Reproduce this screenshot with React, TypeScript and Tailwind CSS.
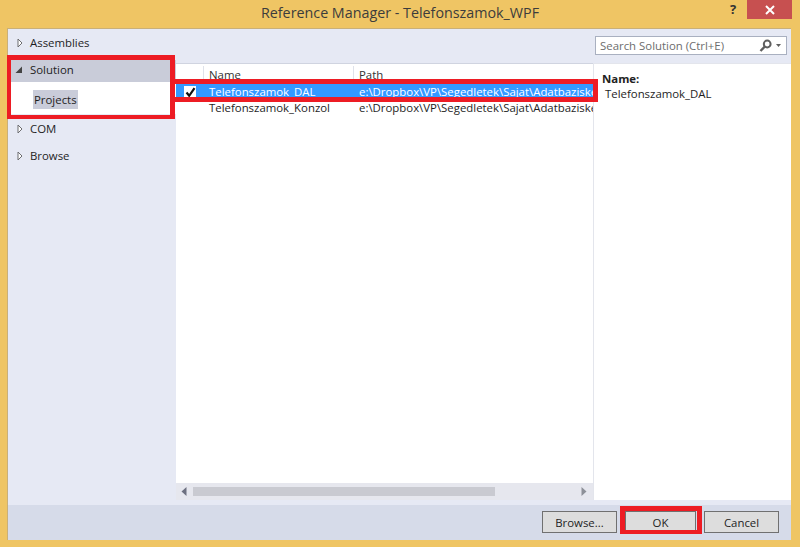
import React from "react";

const Closed = () => (
  <svg width="6" height="10" viewBox="0 0 6 10" className="shrink-0">
    <path d="M1 1 L5 5 L1 9 Z" fill="#ffffff" stroke="#6d6d70" strokeWidth="1" />
  </svg>
);
const Open = () => (
  <svg width="8" height="8" viewBox="0 0 8 8" className="shrink-0">
    <path d="M7 0.5 V7 H0.5 Z" fill="#444444" />
  </svg>
);

const TreeRow = ({ label, top }: { label: string; top: string }) => (
  <div className={`flex items-center h-[17px] pl-[9px] gap-[7px] ${top}`}>
    <Closed />
    <span>{label}</span>
  </div>
);

export default function App() {
  return (
    <div
      className="relative w-[800px] h-[547px] overflow-hidden bg-[#efc564] flex flex-col text-[11.4px] leading-[16px] text-[#1e1e1e]"
      style={{ fontFamily: '"Open Sans", "Noto Sans", sans-serif' }}
    >
      <div className="flex h-[28px] shrink-0">
        <div className="flex-1 pl-[81px] pt-[3px] text-center text-[14.3px] leading-[20px] text-[#3c3c3c]">
          Reference Manager - Telefonszamok_WPF
        </div>
        <div className="w-[28px] text-center font-bold text-[13px] leading-[18px] text-[#333]">?</div>
        <div className="w-[45px] h-[19px] mr-[8px] bg-[#c75050] flex items-center justify-center">
          <svg width="10" height="10" viewBox="0 0 10 10">
            <path d="M1 1 L9 9 M9 1 L1 9" stroke="#ffffff" strokeWidth="2" />
          </svg>
        </div>
      </div>
      <div className="ml-[7px] mr-[9px] mb-[7px] flex-1 min-h-0 flex flex-col border-t border-l border-[#c9b079] bg-[#e6e9f4]">
        <div className="flex flex-1 min-h-0">
          <div className="w-[168px] shrink-0 pt-[5px]">
            <TreeRow label="Assemblies" top="" />
            <div className="mt-[9px] h-[22px] pb-[2px] bg-[#c9ccd9] flex items-center pl-[7px] gap-[7px]">
              <Open />
              <span>Solution</span>
            </div>
            <div className="h-[32px] bg-white flex items-start pt-[8px] pl-[25px]">
              <span className="bg-[#c9ccd9] px-[1px] h-[19px] leading-[19px]">Projects</span>
            </div>
            <TreeRow label="COM" top="mt-[6px]" />
            <TreeRow label="Browse" top="mt-[10px]" />
          </div>
          <div className="flex-1 min-w-0 flex flex-col">
            <div className="h-[34px] shrink-0 flex justify-end items-start pt-[7px] pr-[4px]">
              <div className="w-[192px] h-[19px] bg-white border border-[#a9b0c0] flex items-center pl-[4px] pr-[5px] justify-between text-[#6d6d6d]">
                <span>Search Solution (Ctrl+E)</span>
                <div className="flex items-center gap-[4px]">
                  <svg width="13" height="14" viewBox="0 0 13 14">
                    <circle cx="8.2" cy="5" r="3.4" fill="none" stroke="#5f5f5f" strokeWidth="2" />
                    <path d="M5.8 7.5 L1.5 12" stroke="#5f5f5f" strokeWidth="2.4" />
                  </svg>
                  <svg width="5" height="3" viewBox="0 0 5 3">
                    <path d="M0 0 H5 L2.5 3 Z" fill="#5f5f5f" />
                  </svg>
                </div>
              </div>
            </div>
            <div className="flex flex-1 min-h-0 mb-[5px]">
              <div className="w-[417px] shrink-0 flex flex-col bg-white border-t border-[#d0d4e0]">
                <div className="flex-1 min-h-0 overflow-hidden">
                  <div className="flex h-[17px] pt-[2px] leading-[17px] text-[#333]">
                    <div className="w-[28px] border-r border-[#dfe2ea]" />
                    <div className="w-[150px] pl-[5px] border-r border-[#dfe2ea]">Name</div>
                    <div className="pl-[5px]">Path</div>
                  </div>
                  <div className="flex h-[16px] bg-[#3399ff] text-white items-center whitespace-nowrap overflow-hidden mt-[3px]">
                    <div className="w-[28px] flex justify-start shrink-0 pl-[8px]">
                      <div className="w-[12px] h-[13px] bg-white flex items-center justify-center">
                        <svg width="11" height="11" viewBox="0 0 11 11">
                          <path d="M1.5 5.5 L4.2 8.8 L9.5 1.2" fill="none" stroke="#111111" strokeWidth="2.2" />
                        </svg>
                      </div>
                    </div>
                    <div className="w-[150px] pl-[5px] shrink-0">Telefonszamok_DAL</div>
                    <div className="pl-[5px]">e:\Dropbox\VP\Segedletek\Sajat\Adatbaziskezeles</div>
                  </div>
                  <div className="flex h-[16px] items-center whitespace-nowrap overflow-hidden">
                    <div className="w-[28px] shrink-0" />
                    <div className="w-[150px] pl-[5px] shrink-0">Telefonszamok_Konzol</div>
                    <div className="pl-[5px]">e:\Dropbox\VP\Segedletek\Sajat\Adatbaziskezeles</div>
                  </div>
                </div>
                <div className="h-[17px] shrink-0 bg-[#e6e7ee] flex items-center pl-[5px] pr-[6px]">
                  <svg width="6" height="9" viewBox="0 0 6 9"><path d="M5.5 0 V9 L0.5 4.5 Z" fill="#6d7080" /></svg>
                  <div className="ml-[6px] w-[302px] h-[9px] bg-[#c9cad1]" />
                  <div className="flex-1" />
                  <svg width="6" height="9" viewBox="0 0 6 9"><path d="M0.5 0 V9 L5.5 4.5 Z" fill="#8d9098" /></svg>
                </div>
              </div>
              <div className="flex-1 bg-white border-l border-t border-[#e3e5ec] pl-[8px] pt-[7px]">
                <div className="font-bold leading-[15px] text-[#222]">Name:</div>
                <div className="pl-[3px] leading-[15px]">Telefonszamok_DAL</div>
              </div>
            </div>
          </div>
        </div>
        <div className="h-[35px] shrink-0 bg-[#d6dbe9] flex justify-end items-start pt-[6px] pr-[12px] gap-[8px]">
          <button className="w-[75px] h-[22px] pt-[1px] bg-[#dddddd] border border-[#707070] text-[#1e1e1e]">Browse...</button>
          <button className="w-[71px] h-[22px] pt-[1px] bg-[#dddddd] border border-[#707070] text-[#1e1e1e]">OK</button>
          <button className="w-[75px] h-[22px] pt-[1px] bg-[#dddddd] border border-[#707070] text-[#1e1e1e]">Cancel</button>
        </div>
      </div>

      <div className="absolute left-[7px] top-[55px] w-[168px] h-[64px] border-x-[4px] border-b-[4px] border-t-[5px] border-r-[5px] border-[#ed1c24]" />
      <div className="absolute left-[175px] top-[79px] w-[423px] h-[23px] border-y-[5px] border-r-[5px] border-[#ed1c24]" />
      <div className="absolute left-[620px] top-[506px] w-[82px] h-[28px] border-x-[5px] border-t-[5px] border-b-[4px] border-[#ed1c24]" />
    </div>
  );
}
